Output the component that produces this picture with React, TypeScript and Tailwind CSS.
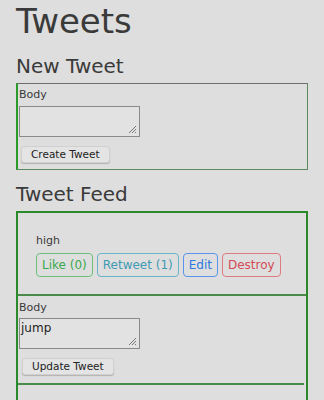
import React from 'react';

const font = { fontFamily: '"DejaVu Sans", Verdana, sans-serif' };

const Resize = () => (
  <svg className="absolute bottom-[2px] right-[2px]" width="9" height="9" viewBox="0 0 9 9">
    <path d="M8 1 L1 8 M8 4 L4 8 M8 7 L7 8" stroke="#777" strokeWidth="1" />
  </svg>
);

const TextBox: React.FC<{ value?: string }> = ({ value }) => (
  <div className="relative w-[121px] h-[31px] border border-[#8a8a8a] bg-[#e2e2e2] text-[12px] leading-[14px] px-[1px] pt-[2px] text-[#222]">
    {value}
    <Resize />
  </div>
);

const PlainButton: React.FC<{ label: string }> = ({ label }) => (
  <button className="h-[17px] px-[9px] rounded-[3px] bg-[#e4e4e4] text-[10.5px] leading-[15px] text-[#222] shadow-[0_1px_1px_rgba(0,0,0,0.2)] border border-[#d0d0d0]">
    {label}
  </button>
);

const ActionButton: React.FC<{ label: string; cls: string }> = ({ label, cls }) => (
  <button className={`h-[24px] px-[5px] rounded-[4px] border text-[12px] leading-[22px] ${cls}`}>{label}</button>
);

export default function App() {
  return (
    <div className="h-[400px] overflow-hidden bg-[#dedede] px-4 text-[#3a3a3a]" style={font}>
      <h1 className="text-[34px] leading-[40px] pt-[1px]">Tweets</h1>
      <h2 className="text-[20px] leading-[24px] mt-[13px]">New Tweet</h2>
      <div className="mt-[5px] h-[87px] border border-[#6e6e6e] border-l-2 border-l-[#2a9a2a] border-r-[#5c8a5c] border-b-[#5c8a5c] pl-[1px] pt-[4px]">
        <div className="text-[11px] leading-[14px]">Body</div>
        <div className="mt-[4px] flex">
          <TextBox />
        </div>
        <div className="mt-[9px] pl-[2px] flex">
          <PlainButton label="Create Tweet" />
        </div>
      </div>
      <h2 className="text-[20px] leading-[24px] mt-[12px]">Tweet Feed</h2>
      <div className="mt-[5px] border-2 border-[#2a8a2a] border-b-0">
        <div className="h-[83px] border-b-2 border-[#4a8a4a] pl-[18px] pt-[21px]">
          <div className="text-[11px] leading-[14px]">high</div>
          <div className="flex gap-[4px] mt-[5px]">
            <ActionButton label="Like (0)" cls="border-[#6cc07c] text-[#3aa84e]" />
            <ActionButton label="Retweet (1)" cls="border-[#6ab4c8] text-[#3f9ab4]" />
            <ActionButton label="Edit" cls="border-[#5a94ec] text-[#2f7ae0]" />
            <ActionButton label="Destroy" cls="border-[#de7a82] text-[#d44a56]" />
          </div>
        </div>
        <div className="h-[89px] border-b-2 border-[#4a8a4a] pl-[1px] pt-[5px] mr-[2px]">
          <div className="text-[11px] leading-[14px]">Body</div>
          <div className="mt-[3px] flex">
            <TextBox value="jump" />
          </div>
          <div className="mt-[9px] pl-[3px] flex">
            <PlainButton label="Update Tweet" />
          </div>
        </div>
        <div className="h-[20px]" />
      </div>
    </div>
  );
}
